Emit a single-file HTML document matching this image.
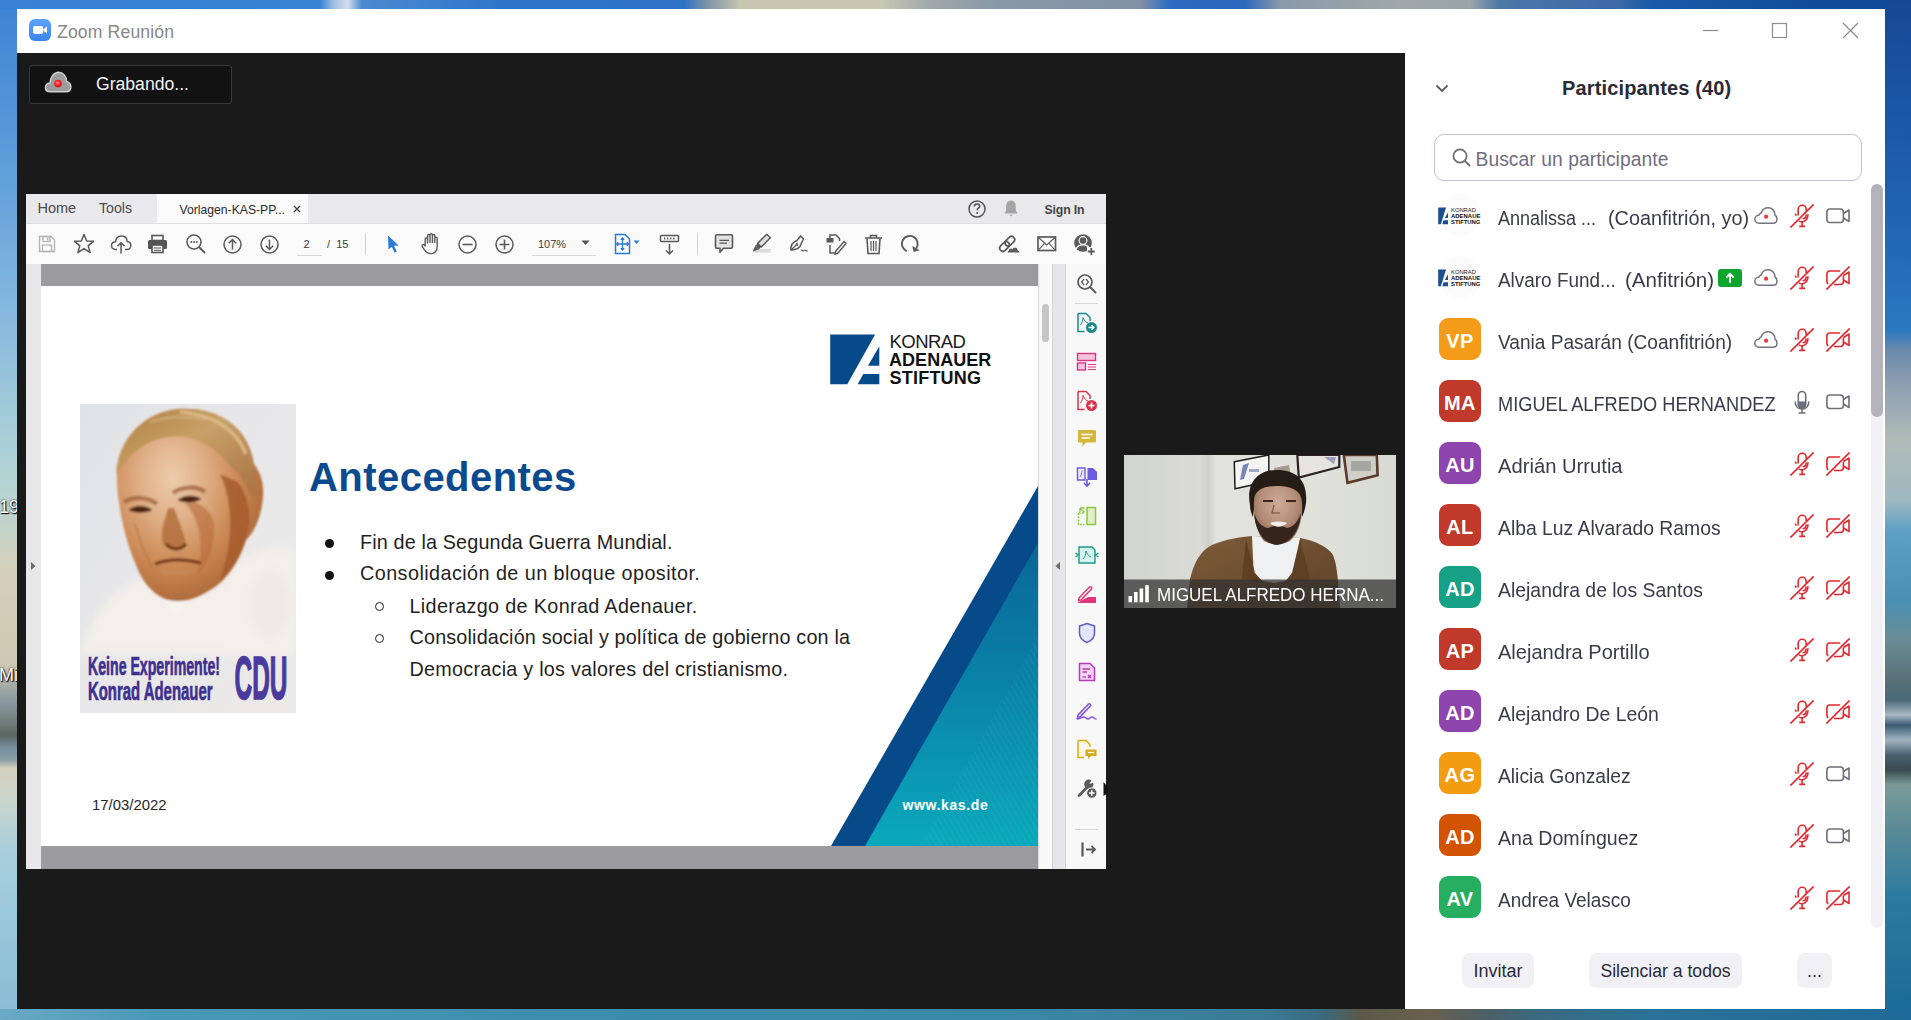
<!DOCTYPE html>
<html><head><meta charset="utf-8">
<style>
*{box-sizing:border-box;margin:0;padding:0}
html,body{width:1911px;height:1020px;overflow:hidden;background:#2f7ab8;font-family:"Liberation Sans",sans-serif}
.a{position:absolute}
#dl{left:0;top:0;width:17px;height:1020px;background:linear-gradient(180deg,#3d83d4 0px,#5a9bd9 150px,#82b6de 300px,#a9cfd8 440px,#b6d3d2 490px,#c4d4c8 530px,#d4d0bc 565px,#d2c9b4 640px,#cec6b4 666px,#a8aca8 684px,#8a9aa0 700px,#6e7a78 725px,#5c6662 735px,#7890a0 748px,#8aa0a8 760px,#d6d0be 768px,#cad6cc 800px,#a8cedc 850px,#94c4da 950px,#88bcd6 1020px)}
#dt{left:0;top:0;width:1911px;height:9px;background:linear-gradient(90deg,#3a82d6 0,#3580d2 200px,#3a84d4 320px,#a8c4e0 335px,#d0dcec 348px,#4a8ad0 362px,#2f76ca 500px,#2d72c6 684px,#7890a8 705px,#c6c6b0 740px,#c8c8b2 880px,#a0a8aa 930px,#8898a8 1000px,#8292a6 1140px,#2a6ac0 1170px,#2a68bc 1245px,#8a9aaa 1280px,#a0a8a8 1400px,#9aa4a8 1470px,#4a78a8 1500px,#3a6aa8 1620px,#1a5aa8 1650px,#124c9a 1800px,#0f4a98 1911px)}
#dr{left:1885px;top:0;width:26px;height:1020px;background:linear-gradient(180deg,#144896 0,#1a55a4 100px,#1f62b0 200px,#2a78c0 330px,#6a8aac 350px,#8a9cb0 380px,#b0bcb8 440px,#a0b8c0 500px,#5fa0c4 530px,#4a90b4 600px,#6a8c94 640px,#587078 680px,#4a6878 700px,#a8b8c4 715px,#3a5a70 725px,#a0b4c0 740px,#4a6070 755px,#3a4a50 770px,#7a9a98 785px,#5a8a98 830px,#2a7aa0 900px,#1a6a98 1020px)}
#db{left:0;top:1009px;width:1911px;height:11px;background:linear-gradient(90deg,#6aaac4 0,#4a98b8 150px,#3a8cac 640px,#3a88a8 1000px,#3a7a94 1270px,#3a6a80 1320px,#5a5a48 1360px,#6a6050 1430px,#4a6068 1490px,#3a6a80 1540px,#2a7298 1650px,#1e6a98 1911px)}
#win{left:17px;top:9px;width:1868px;height:1000px;background:#fff}
#dark{left:17px;top:53px;width:1388px;height:956px;background:#1a1a1a}

.t{position:absolute;white-space:nowrap;line-height:1}
#zicon{left:29px;top:19px;width:22px;height:22px;border-radius:6px;background:linear-gradient(180deg,#5ea3ff,#3c84f0)}
#ztitle{left:57px;top:24px;font-size:17.6px;color:#878787;letter-spacing:0.15px}
#rec{left:29px;top:65px;width:203px;height:39px;background:#121212;border:1px solid #3a3a3a;border-radius:3px}
#rect{left:96px;top:75.5px;font-size:17.6px;color:#f2f2f2;letter-spacing:0px}
#pdf{left:26px;top:194px;width:1080px;height:675px;background:#fafafa}
#tabbar{left:26px;top:194px;width:1080px;height:30px;background:#e9e8eb}
#acttab{left:157px;top:194px;width:151px;height:30px;background:#fafafa}
#lstrip{left:26px;top:264px;width:15px;height:605px;background:#e8e7ea}
#gb1{left:41px;top:264px;width:997px;height:22px;background:#9c9c9e}
#gb2{left:41px;top:846px;width:997px;height:23px;background:#9c9c9e}
#page{left:41px;top:286px;width:997px;height:560px;background:#fff;overflow:hidden}
#scol{left:1038px;top:264px;width:14px;height:605px;background:#f9f9f9;border-left:1px solid #d8d8d8}
#thumb{left:1042px;top:304px;width:7px;height:38px;background:#c6c6c6;border-radius:4px}
#gcol{left:1052px;top:264px;width:14px;height:605px;background:#e6e5e9;border-left:1px solid #d4d4d8;border-right:1px solid #d4d4d8}
#rpanel{left:1066px;top:264px;width:40px;height:605px;background:#f8f8f8}

#ttl{left:309px;top:456.5px;font-size:40px;font-weight:700;color:#0b4a8f;letter-spacing:0.45px}
.bl{font-size:19.8px;color:#1f1f1f}
.dot{width:9px;height:9px;border-radius:50%;background:#111}
.cir{width:9px;height:9px;border-radius:50%;border:1.2px solid #222}
#date{left:92px;top:798.3px;font-size:14.9px;color:#262626}

.ic{position:absolute}

#ppanel{left:1405px;top:53px;width:480px;height:956px;background:#fff}
.pn{font-size:19.7px;color:#3b3b4a;transform-origin:0 0}
.av{position:absolute;width:42px;height:42px;border-radius:9px;color:#fff;font-weight:700;font-size:20px;text-align:center;line-height:47px;letter-spacing:0.4px;text-indent:0.4px}
.btn{position:absolute;height:35px;border-radius:8px;background:#f1f1f5;font-size:18px;color:#2a2a36;text-align:center;line-height:35px}
</style></head><body>
<div id="dl" class="a"></div><div id="dt" class="a"></div><div id="dr" class="a"></div><div id="db" class="a"></div>

<div class="t" style="left:-1px;top:498px;font-size:18px;color:#fff;text-shadow:0 0 2px #000,1px 1px 1px #000">19</div>
<div class="t" style="left:-1px;top:666px;font-size:18px;color:#fff;text-shadow:0 0 2px #000,1px 1px 1px #000">Mi</div>
<div id="win" class="a"></div>
<div id="dark" class="a"></div>

<div id="zicon" class="a"><svg width="22" height="22" viewBox="0 0 22 22"><rect x="4" y="7" width="10" height="8" rx="2" fill="#fff"/><path d="M14.5 10 L18 7.5 V14.5 L14.5 12Z" fill="#fff"/></svg></div>
<div id="ztitle" class="t">Zoom Reunión</div>
<svg class="a" style="left:1690px;top:15px" width="180" height="32" viewBox="0 0 180 32"><line x1="13" y1="15.5" x2="28" y2="15.5" stroke="#8c8c8c" stroke-width="1.2"/><rect x="82.5" y="8.5" width="14" height="14" fill="none" stroke="#8c8c8c" stroke-width="1.2"/><path d="M153 8 L168 23 M168 8 L153 23" stroke="#8c8c8c" stroke-width="1.2"/></svg>
<div id="rec" class="a"></div>
<svg class="a" style="left:44px;top:71px" width="28" height="22" viewBox="0 0 28 22"><defs><radialGradient id="rdot" cx="0.45" cy="0.4" r="0.6"><stop offset="0" stop-color="#ff9090"/><stop offset="0.5" stop-color="#ff2424"/><stop offset="1" stop-color="#d01010"/></radialGradient></defs><path d="M6 20.8 C3.2 20.8 1.4 18.9 1.4 16.5 C1.4 13.9 3.4 12 6 12 C6.4 6.3 9.8 1.2 14.5 1.2 C19.3 1.2 22.4 5.2 22.7 10.6 C25.2 11.1 26.9 13.4 26.9 16 C26.9 18.9 24.8 20.8 22 20.8 Z" fill="#9c9c9c" stroke="#d0d0d0" stroke-width="1.4"/><circle cx="14" cy="12.6" r="3.8" fill="url(#rdot)"/></svg>
<div id="rect" class="t">Grabando...</div>
<div id="pdf" class="a"></div>
<div id="tabbar" class="a"></div>
<div id="acttab" class="a"></div>
<div id="lstrip" class="a"></div>
<div id="gb1" class="a"></div>
<div id="gb2" class="a"></div>
<div id="page" class="a"></div>
<div id="scol" class="a"></div>
<div id="thumb" class="a"></div>
<div id="gcol" class="a"></div>
<div id="rpanel" class="a"></div>

<svg class="a" style="left:41px;top:286px" width="997" height="560" viewBox="0 0 997 560">
<defs>
<linearGradient id="tg" x1="0" y1="0" x2="0" y2="1"><stop offset="0" stop-color="#0a6697"/><stop offset="0.45" stop-color="#0a82a8"/><stop offset="1" stop-color="#0aa9bb"/></linearGradient>
<pattern id="hatch" width="5" height="5" patternUnits="userSpaceOnUse" patternTransform="rotate(-30)"><line x1="0" y1="0" x2="0" y2="5" stroke="#ffffff" stroke-opacity="0.10" stroke-width="1"/></pattern>
</defs>
<polygon points="790,560 997,200 997,560" fill="#064a8a"/>
<polygon points="824,560 997,257 997,560" fill="url(#tg)"/>
<polygon points="880,560 997,350 997,560" fill="url(#hatch)"/>
<polygon points="789.2,48.4 834.1,48.4 806.3,98.3 789.2,98.3" fill="#064a8a"/>
<polygon points="838.3,60.2 838.3,79.7 827,79.7" fill="#064a8a"/>
<polygon points="822.3,88 838.3,88 838.3,98.3 816.7,98.3" fill="#064a8a"/>
</svg>
<div class="t" style="left:889.5px;top:332.5px;font-size:18.5px;color:#1a1a1a;letter-spacing:-0.55px">KONRAD</div>
<div class="t" style="left:889px;top:351px;font-size:18px;font-weight:700;color:#111;letter-spacing:0.05px">ADENAUER</div>
<div class="t" style="left:889.5px;top:369px;font-size:18px;font-weight:700;color:#111;letter-spacing:0.22px">STIFTUNG</div>
<div class="t" style="left:902.5px;top:798px;font-size:14px;font-weight:700;color:#fff;letter-spacing:0.62px">www.kas.de</div>
<div id="ttl" class="t">Antecedentes</div>
<div class="a dot" style="left:324.8px;top:539.2px"></div>
<div class="a dot" style="left:324.8px;top:570.6px"></div>
<div class="a cir" style="left:374.7px;top:602.3px"></div>
<div class="a cir" style="left:374.7px;top:633.7px"></div>
<div class="t bl" style="left:360px;top:532.8px;letter-spacing:0.14px">Fin de la Segunda Guerra Mundial.</div>
<div class="t bl" style="left:360px;top:564.3px;letter-spacing:0.44px">Consolidación de un bloque opositor.</div>
<div class="t bl" style="left:409.5px;top:596.7px;letter-spacing:0.34px">Liderazgo de Konrad Adenauer.</div>
<div class="t bl" style="left:409.5px;top:628px;letter-spacing:0.17px">Consolidación social y política de gobierno con la</div>
<div class="t bl" style="left:409.5px;top:659.8px;letter-spacing:0.25px">Democracia y los valores del cristianismo.</div>
<div id="date" class="t">17/03/2022</div>

<svg class="a" style="left:80px;top:404px" width="216" height="309" viewBox="0 0 216 309">
<defs>
<linearGradient id="pbg" x1="0" y1="0" x2="1" y2="1"><stop offset="0" stop-color="#e1e2e5"/><stop offset="0.5" stop-color="#e8e8ea"/><stop offset="1" stop-color="#ece9e6"/></linearGradient>
<radialGradient id="face" cx="0.38" cy="0.36" r="0.72"><stop offset="0" stop-color="#ecccaa"/><stop offset="0.3" stop-color="#e0b088"/><stop offset="0.62" stop-color="#cc8a56"/><stop offset="1" stop-color="#a45e30"/></radialGradient>
<linearGradient id="hair" x1="0" y1="0" x2="1" y2="1"><stop offset="0" stop-color="#b08040"/><stop offset="0.45" stop-color="#c8a068"/><stop offset="1" stop-color="#a87040"/></linearGradient>
<filter id="soft" x="-10%" y="-10%" width="120%" height="120%"><feGaussianBlur stdDeviation="1.3"/></filter>
<filter id="soft2" x="-20%" y="-20%" width="140%" height="140%"><feGaussianBlur stdDeviation="3.5"/></filter>
</defs>
<rect width="216" height="309" fill="url(#pbg)"/>
<g filter="url(#soft2)">
<path d="M0 250 C10 215 30 185 62 174 L95 197 L141 180 C160 150 185 140 216 145 L216 250 Z" fill="#f3efea"/>
<ellipse cx="190" cy="200" rx="22" ry="35" fill="#ebe6e0" opacity="0.5"/>
</g>
<g filter="url(#soft)">
<path d="M37 73 C35 45 55 10 97 5 C135 2 168 20 174 60 C180 68 184 78 183 92 C182 110 175 128 166 136 C158 160 145 178 130 186 C118 194 105 198 95 197 C80 196 68 185 61 172 C50 150 43 125 40 105 C38 95 37 85 37 73 Z" fill="url(#face)"/>
<path d="M36 70 C38 42 58 10 97 5 C135 2 168 20 174 62 C176 75 176 85 172 92 C166 80 160 70 152 64 C140 48 125 37 105 33 C85 30 62 38 48 55 C42 62 38 68 36 70 Z" fill="url(#hair)"/>
<path d="M100 8 C128 10 155 22 166 50" stroke="#e0c090" stroke-width="3.5" fill="none" opacity="0.8"/>
<path d="M70 18 C90 12 110 12 125 16" stroke="#d4b080" stroke-width="2.5" fill="none" opacity="0.7"/>
<path d="M140 70 C152 95 155 135 140 176 C152 168 162 150 166 135 C172 115 170 95 158 78Z" fill="#a65a2c" opacity="0.85"/>
<path d="M105 100 C118 110 125 140 118 170 C128 160 136 140 134 120 C132 110 125 102 115 98Z" fill="#b86a3a" opacity="0.6"/>
<path d="M44 98 C54 92 68 93 77 100 M93 89 C103 82 117 82 125 88" stroke="#9a5a34" stroke-width="4.5" fill="none" opacity="0.7"/>
<path d="M49 106 C55 101 65 101 72 106 C65 109 55 109 49 106Z M98 96 C105 91 114 91 121 95 C114 99 105 99 98 96Z" fill="#4a2818" stroke="#6a3a22" stroke-width="1"/>
<path d="M88 104 C84 118 80 130 83 140 C90 146 100 146 106 140 C104 128 98 115 94 104Z" fill="#b06a3a" opacity="0.8"/>
<path d="M86 140 C92 147 101 146 106 140" stroke="#6a3418" stroke-width="3.2" fill="none"/>
<path d="M75 160 C88 155 105 155 121 159" stroke="#7a3a1c" stroke-width="3.2" fill="none"/>
<path d="M80 167 C92 170 105 170 116 166" stroke="#c98a5e" stroke-width="3" fill="none" opacity="0.7"/>
<path d="M55 120 C60 138 66 152 72 164" stroke="#b87444" stroke-width="2.2" fill="none" opacity="0.6"/>
<path d="M85 197 L97 214 L108 197Z" fill="#f6f2ee"/>
</g>
<g font-family="Liberation Sans" font-weight="700">
<text x="8" y="271" font-size="26.5" fill="#3e3090" stroke="#3e3090" stroke-width="0.7" textLength="132" lengthAdjust="spacingAndGlyphs">Keine Experimente!</text>
<text x="8" y="295.8" font-size="25.5" fill="#3e3090" stroke="#3e3090" stroke-width="0.7" textLength="124.5" lengthAdjust="spacingAndGlyphs">Konrad Adenauer</text>
<text x="154.5" y="295.3" font-size="60.5" fill="#4a3a9e" stroke="#4a3a9e" stroke-width="1.6" textLength="53"  lengthAdjust="spacingAndGlyphs">CDU</text>
</g>
</svg>

<div class="t" style="left:37.5px;top:201px;font-size:14.5px;color:#4a4a4a">Home</div>
<div class="t" style="left:99px;top:201px;font-size:14.2px;color:#4a4a4a">Tools</div>
<div class="t" style="left:179.5px;top:203.5px;font-size:12.2px;color:#2b2b2b;letter-spacing:0px">Vorlagen-KAS-PP...</div>
<svg class="ic" style="left:292px;top:204px" width="10" height="10" viewBox="0 0 10 10"><path d="M2 2 L8 8 M8 2 L2 8" stroke="#444" stroke-width="1.4"/></svg>
<svg class="ic" style="left:966.5px;top:198.5px" width="20" height="20" viewBox="0 0 20 20"><circle cx="10" cy="10" r="8" fill="none" stroke="#555" stroke-width="1.5"/><path d="M7.3 7.6 C7.3 5.8 8.6 5 10 5 C11.6 5 12.7 6 12.7 7.3 C12.7 9.2 10.2 9.3 10.2 11.3" fill="none" stroke="#555" stroke-width="1.6"/><circle cx="10.2" cy="14" r="1" fill="#555"/></svg>
<svg class="ic" style="left:1003px;top:199px" width="16" height="19" viewBox="0 0 16 19"><path d="M8 1.5 C4.5 1.5 3.2 4.5 3.2 7.5 L3.2 11.5 L1.3 14.5 L14.7 14.5 L12.8 11.5 L12.8 7.5 C12.8 4.5 11.5 1.5 8 1.5Z" fill="#a4a4a4"/><path d="M6.3 15.8 L9.7 15.8 L8 17.5Z" fill="#a4a4a4"/></svg>
<div class="t" style="left:1044.5px;top:203.8px;font-size:12.3px;font-weight:700;color:#444;letter-spacing:-0.15px">Sign In</div>
<div class="a" style="left:26px;top:223px;width:1080px;height:1px;background:#dedde0"></div>

<svg class="ic" style="left:37px;top:234px" width="20" height="20" viewBox="0 0 20 20"><path d="M2.5 2.5 H14 L17.5 6 V17.5 H2.5 Z" fill="none" stroke="#b4b4b4" stroke-width="1.4"/><rect x="6" y="2.5" width="7" height="5" fill="none" stroke="#b4b4b4" stroke-width="1.3"/><rect x="10" y="3.5" width="1.5" height="3" fill="#b4b4b4"/><rect x="5.5" y="11" width="9" height="6.5" fill="none" stroke="#b4b4b4" stroke-width="1.3"/></svg>
<svg class="ic" style="left:73px;top:233px" width="22" height="21" viewBox="0 0 22 21"><path d="M11 1.5 L13.7 8 L20.5 8.3 L15.2 12.6 L17.1 19.5 L11 15.6 L4.9 19.5 L6.8 12.6 L1.5 8.3 L8.3 8 Z" fill="none" stroke="#5a5a5a" stroke-width="1.5" stroke-linejoin="round"/></svg>
<svg class="ic" style="left:110px;top:233px" width="22" height="22" viewBox="0 0 22 22"><path d="M7 16.5 H5.5 C3 16.5 1.5 14.5 1.5 12.5 C1.5 10 3.5 8.5 5.5 8.7 C6 5 8.5 3 11.5 3 C15 3 17 5.5 17.2 8.5 C19.5 8.7 20.8 10.5 20.8 12.5 C20.8 14.8 19 16.5 16.8 16.5 H15" fill="none" stroke="#5a5a5a" stroke-width="1.5"/><path d="M11 20.5 V10 M7.5 13.3 L11 9.8 L14.5 13.3" fill="none" stroke="#5a5a5a" stroke-width="1.5"/></svg>
<svg class="ic" style="left:147px;top:234px" width="21" height="20" viewBox="0 0 21 20"><rect x="5" y="1.5" width="11" height="5" fill="none" stroke="#555" stroke-width="1.6"/><rect x="1" y="6" width="19" height="9" rx="1.5" fill="#555"/><rect x="5" y="11" width="11" height="7.5" fill="#fafafa" stroke="#555" stroke-width="1.6"/><path d="M7 14 H14 M7 16.3 H14" stroke="#555" stroke-width="1"/></svg>
<svg class="ic" style="left:185px;top:233px" width="22" height="22" viewBox="0 0 22 22"><circle cx="9" cy="9" r="7" fill="none" stroke="#5a5a5a" stroke-width="1.6"/><path d="M14 14 L20 20" stroke="#5a5a5a" stroke-width="1.8"/><circle cx="6.3" cy="9" r="1" fill="#5a5a5a"/><circle cx="9" cy="9" r="1" fill="#5a5a5a"/><circle cx="11.7" cy="9" r="1" fill="#5a5a5a"/></svg>
<svg class="ic" style="left:222px;top:234px" width="21" height="21" viewBox="0 0 21 21"><circle cx="10.5" cy="10.5" r="8.5" fill="none" stroke="#5a5a5a" stroke-width="1.5"/><path d="M10.5 15.5 V5.5 M6.8 9.2 L10.5 5.5 L14.2 9.2" fill="none" stroke="#5a5a5a" stroke-width="1.5"/></svg>
<svg class="ic" style="left:259px;top:234px" width="21" height="21" viewBox="0 0 21 21"><circle cx="10.5" cy="10.5" r="8.5" fill="none" stroke="#5a5a5a" stroke-width="1.5"/><path d="M10.5 5.5 V15.5 M6.8 11.8 L10.5 15.5 L14.2 11.8" fill="none" stroke="#5a5a5a" stroke-width="1.5"/></svg>
<div class="t" style="left:303.5px;top:238.5px;font-size:11px;color:#3a3a3a">2</div>
<div class="a" style="left:297px;top:255px;width:25px;height:1px;background:#d8d8d8"></div>
<div class="t" style="left:327px;top:238.5px;font-size:11px;color:#3a3a3a">/ &nbsp;15</div>
<div class="a" style="left:365px;top:233px;width:1px;height:22px;background:#d4d4d4"></div>
<svg class="ic" style="left:385px;top:234px" width="16" height="20" viewBox="0 0 16 20"><path d="M3 1.5 L13.5 11.5 L9 11.8 L11.8 17.5 L9.5 18.5 L6.8 12.8 L3.5 15.5 Z" fill="#2c7ad8"/></svg>
<svg class="ic" style="left:420px;top:232px" width="21" height="23" viewBox="0 0 21 23"><path d="M5.2 13.5 V7 C5.2 5.6 7.6 5.6 7.6 7 V11 M7.6 10.5 V3.6 C7.6 2.2 10 2.2 10 3.6 V10.5 M10 10.5 V2.8 C10 1.4 12.4 1.4 12.4 2.8 V10.5 M12.4 10.5 V3.6 C12.4 2.2 14.8 2.2 14.8 3.6 V10.5 M14.8 10.5 V6.2 C14.8 4.8 17.2 4.8 17.2 6.2 V14 C17.2 19 14.6 21.6 11 21.6 C7.5 21.6 6 20.2 4.4 17.8 L2.2 14.3 C1.4 13 3.2 11.9 4.2 12.9 L5.2 14" fill="none" stroke="#5a5a5a" stroke-width="1.4" stroke-linejoin="round" stroke-linecap="round"/></svg>
<svg class="ic" style="left:457px;top:234px" width="21" height="21" viewBox="0 0 21 21"><circle cx="10.5" cy="10.5" r="8.5" fill="none" stroke="#5a5a5a" stroke-width="1.5"/><path d="M5.5 10.5 H15.5" stroke="#5a5a5a" stroke-width="1.6"/></svg>
<svg class="ic" style="left:494px;top:234px" width="21" height="21" viewBox="0 0 21 21"><circle cx="10.5" cy="10.5" r="8.5" fill="none" stroke="#5a5a5a" stroke-width="1.5"/><path d="M5.5 10.5 H15.5 M10.5 5.5 V15.5" stroke="#5a5a5a" stroke-width="1.6"/></svg>
<div class="t" style="left:538px;top:238.5px;font-size:11px;color:#3a3a3a">107%</div>
<svg class="ic" style="left:581px;top:240px" width="9" height="6" viewBox="0 0 9 6"><path d="M0.5 0.5 H8.5 L4.5 5Z" fill="#555"/></svg>
<div class="a" style="left:532px;top:255px;width:64px;height:1px;background:#d8d8d8"></div>
<svg class="ic" style="left:613px;top:233px" width="28" height="22" viewBox="0 0 28 22"><path d="M2.5 1.5 H12 L16.5 6 V20.5 H2.5 Z" fill="none" stroke="#2c7ad8" stroke-width="1.5"/><path d="M9.5 5 V17 M3.5 11 H15.5 M7.8 6.8 L9.5 5 L11.2 6.8 M7.8 15.2 L9.5 17 L11.2 15.2 M5.3 9.3 L3.5 11 L5.3 12.7 M13.7 9.3 L15.5 11 L13.7 12.7" fill="none" stroke="#2c7ad8" stroke-width="1.3"/><path d="M20.5 7.5 H26.5 L23.5 11Z" fill="#2c7ad8"/></svg>
<svg class="ic" style="left:659px;top:234px" width="22" height="22" viewBox="0 0 22 22"><rect x="1.5" y="1.5" width="18" height="6" rx="1" fill="none" stroke="#5a5a5a" stroke-width="1.5"/><path d="M5 4.5 H6.3 M8 4.5 H9.3 M11 4.5 H12.3 M14 4.5 H15.3" stroke="#5a5a5a" stroke-width="1.8"/><path d="M10.5 10 V20 M7 16.5 L10.5 20 L14 16.5" fill="none" stroke="#5a5a5a" stroke-width="1.5"/></svg>
<div class="a" style="left:697px;top:233px;width:1px;height:22px;background:#d4d4d4"></div>
<svg class="ic" style="left:714px;top:233px" width="20" height="21" viewBox="0 0 20 21"><path d="M3 1.8 H17 C17.8 1.8 18.5 2.5 18.5 3.3 V13.8 C18.5 14.6 17.8 15.3 17 15.3 H9.5 L6 19.3 V15.3 H3 C2.2 15.3 1.5 14.6 1.5 13.8 V3.3 C1.5 2.5 2.2 1.8 3 1.8Z" fill="#e2e2e2" stroke="#5a5a5a" stroke-width="1.6" stroke-linejoin="round"/><path d="M5.5 7.3 H15 M5.5 10.2 H13" stroke="#5a5a5a" stroke-width="1.2"/></svg>
<svg class="ic" style="left:751px;top:232px" width="22" height="22" viewBox="0 0 22 22"><rect x="1.8" y="16.9" width="18" height="3.7" fill="#dadada"/><polygon points="15.8,2.2 19.4,5.8 10.2,15 6.6,11.4" fill="#e0e0e0" stroke="#5a5a5a" stroke-width="1.5" stroke-linejoin="round"/><polygon points="6.6,11.4 10.2,15 7.8,17.4 4.2,13.8" fill="#5a5a5a"/><polygon points="4.2,13.8 7.8,17.4 1.8,19.6" fill="#5a5a5a"/></svg>
<svg class="ic" style="left:788px;top:233px" width="22" height="22" viewBox="0 0 22 22"><path d="M3 17 C2.5 12 5 9 9 7.5 L12.5 3 L15.5 6 L13.5 10 C12.5 14 9 17 3 17Z" fill="none" stroke="#5a5a5a" stroke-width="1.5"/><circle cx="9" cy="11.5" r="1.3" fill="#5a5a5a"/><path d="M3 17 L8.5 11.8" stroke="#5a5a5a" stroke-width="1.2"/><path d="M13 17.5 C14 16 15 19 16 17.5 C17 16 18 19 19.5 17.5" stroke="#5a5a5a" stroke-width="1.1" fill="none"/></svg>
<svg class="ic" style="left:825px;top:233px" width="22" height="22" viewBox="0 0 22 22"><path d="M5 5.5 V2 H11 L14.5 5.5 V8" fill="none" stroke="#5a5a5a" stroke-width="1.5"/><rect x="1.5" y="5" width="7" height="4.5" fill="#5a5a5a"/><path d="M5 12 V20 H10" fill="none" stroke="#5a5a5a" stroke-width="1.5"/><path d="M10.5 18.5 L19 8.5 L21 10.5 L12.5 20.5 L10 21 Z" fill="none" stroke="#5a5a5a" stroke-width="1.4"/></svg>
<svg class="ic" style="left:863px;top:233px" width="21" height="22" viewBox="0 0 21 22"><path d="M2 5 H19 M7.5 5 V2.5 H13.5 V5" fill="none" stroke="#5a5a5a" stroke-width="1.6"/><path d="M4 5.5 L5 20.5 H16 L17 5.5" fill="none" stroke="#5a5a5a" stroke-width="1.6"/><path d="M8 8 V18 M10.5 8 V18 M13 8 V18" stroke="#5a5a5a" stroke-width="1.2"/></svg>
<svg class="ic" style="left:900px;top:233px" width="22" height="22" viewBox="0 0 22 22"><path d="M6.1 17.8 A7.9 7.9 0 1 1 16.6 14.8" fill="none" stroke="#5a5a5a" stroke-width="1.9" stroke-linecap="round"/><path d="M12.3 13 L19.7 17.2 L13.6 19.1Z" fill="#5a5a5a"/></svg>
<svg class="ic" style="left:997px;top:232px" width="24" height="23" viewBox="0 0 24 23"><g transform="rotate(-45 10 12)" fill="none" stroke="#5a5a5a" stroke-width="1.7"><rect x="1" y="8.8" width="11" height="6.4" rx="3.2"/><rect x="8.5" y="8.8" width="11" height="6.4" rx="3.2"/></g><path d="M11.5 21 C10 21 9.8 18.6 11.5 18.4 C11.5 16.2 14 15.5 15.5 16.7 C16.5 14.2 21 14.7 21 18.2 C23 18.2 23 21 21.5 21Z" fill="#5a5a5a" stroke="#fafafa" stroke-width="1"/></svg>
<svg class="ic" style="left:1037px;top:236px" width="20" height="16" viewBox="0 0 20 16"><rect x="1" y="1" width="17.5" height="13.5" fill="none" stroke="#5a5a5a" stroke-width="1.7"/><path d="M1.5 1.5 L9.75 9 L18 1.5 M1.5 14 L7.5 7.3 M18 14 L12 7.3" fill="none" stroke="#5a5a5a" stroke-width="1.1"/></svg>
<svg class="ic" style="left:1073px;top:233px" width="23" height="23" viewBox="0 0 23 23"><circle cx="10" cy="10" r="8.8" fill="#5a5a5a"/><path d="M3.2 15.8 C4.5 12.8 7 11.8 10 11.8 C13 11.8 15.5 12.8 16.8 15.8" fill="none" stroke="#fafafa" stroke-width="1.3"/><circle cx="10" cy="7.6" r="3.9" fill="#5a5a5a" stroke="#fafafa" stroke-width="1.2"/><rect x="14" y="14" width="9" height="9" fill="#fafafa"/><path d="M14.8 18.5 H21.8 M18.3 15 V22" stroke="#5a5a5a" stroke-width="1.8"/></svg>

<svg class="ic" style="left:1076px;top:273px" width="22" height="22" viewBox="0 0 22 22"><circle cx="9" cy="9" r="7" fill="none" stroke="#5a5a5a" stroke-width="1.7"/><path d="M14 14 L20 20" stroke="#5a5a5a" stroke-width="2"/><path d="M8 6 L5.5 9 L8 12 M10 6 L12.5 9 L10 12" fill="none" stroke="#5a5a5a" stroke-width="1.2"/></svg>
<div class="a" style="left:1075px;top:303px;width:23px;height:1px;background:#d8d8d8"></div>
<svg class="ic" style="left:1076px;top:312px" width="22" height="22" viewBox="0 0 22 22"><path d="M2 1.5 H10 L14 5.5 V9 M8.5 19.5 H2 V1.5" fill="none" stroke="#1a8a8a" stroke-width="1.5"/><path d="M4.5 13 C6 11 7 8 7 5.5 C8 8 10 10.5 12 11" fill="none" stroke="#1a8a8a" stroke-width="1"/><circle cx="15.5" cy="15.5" r="5.5" fill="#1a8a8a"/><path d="M12.5 15.5 H17.5 M15.5 13.2 L17.8 15.5 L15.5 17.8" fill="none" stroke="#fff" stroke-width="1.4"/></svg>
<svg class="ic" style="left:1076px;top:352px" width="22" height="20" viewBox="0 0 22 20"><rect x="1.5" y="1.5" width="18" height="7" fill="#f4c6dc" stroke="#d9368a" stroke-width="1.4"/><rect x="1.5" y="11" width="8" height="7" fill="#f4c6dc" stroke="#d9368a" stroke-width="1.4"/><path d="M12 12.5 H20 M12 15 H20 M12 17.5 H20" stroke="#d9368a" stroke-width="1.1"/></svg>
<svg class="ic" style="left:1076px;top:390px" width="22" height="22" viewBox="0 0 22 22"><path d="M2 1.5 H10 L14 5.5 V9 M8.5 19.5 H2 V1.5" fill="none" stroke="#d6334a" stroke-width="1.5"/><path d="M4.5 13 C6 11 7 8 7 5.5 C8 8 10 10.5 12 11" fill="none" stroke="#d6334a" stroke-width="1"/><circle cx="15.5" cy="15.5" r="5.5" fill="#d6334a"/><path d="M12.5 15.5 H18.5 M15.5 12.5 V18.5" stroke="#fff" stroke-width="1.5"/></svg>
<svg class="ic" style="left:1077px;top:429px" width="20" height="20" viewBox="0 0 20 20"><path d="M1 2.5 C1 1.5 1.5 1 2.5 1 H17.5 C18.5 1 19 1.5 19 2.5 V12 C19 13 18.5 13.5 17.5 13.5 H9 L5.5 17.5 V13.5 H2.5 C1.5 13.5 1 13 1 12Z" fill="#d4b73a"/><path d="M4.5 5.5 H15.5 M4.5 9 H13" stroke="#fff" stroke-width="1.5"/></svg>
<svg class="ic" style="left:1076px;top:466px" width="22" height="22" viewBox="0 0 22 22"><path d="M1.5 2 H9 V14 H1.5Z" fill="#eceaff" stroke="#6a5cdc" stroke-width="1.4"/><path d="M11.5 2 H17 L21 6 V14 H11.5Z" fill="#6a5cdc"/><path d="M4 11 C5 9 6 7 6 4.5" fill="none" stroke="#6a5cdc" stroke-width="0.9"/><path d="M11 13 V20 M8 17 L11 20 L14 17" fill="none" stroke="#6a5cdc" stroke-width="1.6"/></svg>
<svg class="ic" style="left:1077px;top:506px" width="20" height="20" viewBox="0 0 20 20"><rect x="10" y="1.5" width="8.5" height="17" fill="#dff0c8" stroke="#8cc63e" stroke-width="1.5"/><path d="M1.5 7 V18.5 H7.5 M1.5 7 H7.5" fill="none" stroke="#8cc63e" stroke-width="1.5" stroke-dasharray="2 1.2"/><path d="M7.5 2 L3 2 M3 2 L3 6 M3 2 L7.5 6.5" fill="none" stroke="#8cc63e" stroke-width="1.3"/></svg>
<svg class="ic" style="left:1075px;top:545px" width="24" height="20" viewBox="0 0 24 20"><path d="M4 2 H17 L20 5 V18 H4Z" fill="#d8f0ee" stroke="#1a9a8a" stroke-width="1.4"/><path d="M0.5 8 L3.5 10 L0.5 12 M23.5 8 L20.5 10 L23.5 12" fill="none" stroke="#1a9a8a" stroke-width="1.4"/><path d="M8 14 C10 12 11 9 11 6 C12 9 14 11.5 16 12" fill="none" stroke="#1a9a8a" stroke-width="1"/></svg>
<svg class="ic" style="left:1076px;top:584px" width="22" height="20" viewBox="0 0 22 20"><path d="M3 14 L13.5 3 C14.5 2 16.5 4 15.5 5 L5 16 L2.5 16.5Z" fill="none" stroke="#e0357a" stroke-width="1.5"/><path d="M1 19 H20 V13 H12Z" fill="#e0357a"/></svg>
<svg class="ic" style="left:1078px;top:622px" width="18" height="22" viewBox="0 0 18 22"><path d="M9 1.5 L16.5 4 V11 C16.5 15.5 13 19 9 20.5 C5 19 1.5 15.5 1.5 11 V4Z" fill="#e4e4fa" stroke="#5c5cc8" stroke-width="1.5"/><path d="M9 2 V20" stroke="#fff" stroke-width="0"/></svg>
<svg class="ic" style="left:1078px;top:662px" width="18" height="20" viewBox="0 0 18 20"><path d="M1.5 1.5 H12 L16.5 6 V18.5 H1.5Z" fill="#f4d4f4" stroke="#b83ab8" stroke-width="1.5"/><path d="M4.5 7 H12 M4.5 10 H9" stroke="#b83ab8" stroke-width="1.3"/><path d="M10 13 L13 16 M13 13 L10 16" stroke="#b83ab8" stroke-width="1.2"/><path d="M4.5 15 H8" stroke="#b83ab8" stroke-width="1.3"/></svg>
<svg class="ic" style="left:1075px;top:700px" width="23" height="22" viewBox="0 0 23 22"><path d="M3 15 L13.5 4 C14.5 3 16.5 5 15.5 6 L5 17 L2.5 17.5Z" fill="#e4dcfa" stroke="#8454d8" stroke-width="1.5"/><path d="M1.5 19 C5 19 7 17 9 17 C11 17 11 19 13 19 C15 19 15 17 17 17 C19 17 19 19 21.5 19" fill="none" stroke="#8454d8" stroke-width="1.3"/></svg>
<svg class="ic" style="left:1076px;top:739px" width="22" height="22" viewBox="0 0 22 22"><path d="M2 1.5 H10 L14 5.5 V8 M8 18.5 H2 V1.5" fill="#fff6cc" stroke="#d4ae1e" stroke-width="1.5"/><path d="M9.5 10.5 H20.5 V17 H15 L12 20 V17 H9.5Z" fill="#d4ae1e"/><path d="M12 13.5 H18" stroke="#fff" stroke-width="1.2"/></svg>
<svg class="ic" style="left:1076px;top:777px" width="22" height="22" viewBox="0 0 22 22"><path d="M3 18.5 L10.5 11" stroke="#5a5a5a" stroke-width="2.6" stroke-linecap="round"/><circle cx="12.8" cy="7.2" r="4.6" fill="#5a5a5a"/><path d="M13 7 L17 1.5 L19.5 5 Z" fill="#f8f8f8"/><circle cx="15.8" cy="16" r="5.2" fill="#5a5a5a" stroke="#f8f8f8" stroke-width="1"/><path d="M13 16 H18.6 M15.8 13.2 V18.8" stroke="#fff" stroke-width="1.5"/></svg>
<div class="a" style="left:1075px;top:828.5px;width:23px;height:1px;background:#d8d8d8"></div>
<svg class="ic" style="left:1081px;top:842px" width="16" height="15" viewBox="0 0 16 15"><path d="M1.5 0.5 V14.5" stroke="#5a5a5a" stroke-width="2.2"/><path d="M5 7.5 H14 M10.5 4 L14 7.5 L10.5 11" fill="none" stroke="#5a5a5a" stroke-width="1.8"/></svg>
<svg class="ic" style="left:30px;top:561px" width="6" height="10" viewBox="0 0 6 10"><path d="M1 1 L5.5 5 L1 9Z" fill="#6a6a6a"/></svg>
<svg class="ic" style="left:1055px;top:561px" width="6" height="10" viewBox="0 0 6 10"><path d="M5 1 L0.5 5 L5 9Z" fill="#6a6a6a"/></svg>


<div id="ppanel" class="a"></div>

<svg class="ic" style="left:1434px;top:80px" width="16" height="16" viewBox="0 0 16 16"><path d="M2.5 5.5 L8 11 L13.5 5.5" fill="none" stroke="#5c5c6a" stroke-width="1.8"/></svg>
<div class="t" style="left:1562px;top:78px;font-size:20px;font-weight:700;color:#2a2a36;letter-spacing:0.15px">Participantes (40)</div>
<div class="a" style="left:1434px;top:134px;width:428px;height:47px;border:1.8px solid #c2c0d4;border-radius:10px"></div>
<svg class="ic" style="left:1450.7px;top:147.4px" width="22" height="22" viewBox="0 0 22 22"><circle cx="9" cy="9" r="6.6" fill="none" stroke="#6b6b7a" stroke-width="1.7"/><path d="M13.8 13.8 L19 19" stroke="#6b6b7a" stroke-width="1.9"/></svg>
<div class="t" style="left:1475.5px;top:149.6px;font-size:19.3px;color:#6f6e82;letter-spacing:0.05px">Buscar un participante</div>
<div class="a" style="left:1871px;top:184px;width:12px;height:744px;border-radius:6px;background:#f1f0f5"></div>
<div class="a" style="left:1871px;top:184px;width:12px;height:233px;border-radius:6px;background:#b4b3bb"></div>
<div class="a" style="left:1438.5px;top:194.4px;width:42px;height:42px;border-radius:21px;background:#fbfbfb"></div><svg class="ic" style="left:1438px;top:204.4px" width="44" height="22" viewBox="0 0 44 22"><polygon points="0.2,3.6 8,3.6 2.9,20.2 0.2,20.2" fill="#1d4f8f"/><polygon points="10,8.4 10,14 6.9,14" fill="#1d4f8f"/><polygon points="5.6,16.2 10,16.2 10,20.2 4.3,20.2" fill="#1d4f8f"/><text x="13" y="8.4" font-family="Liberation Sans" font-size="6" fill="#222" textLength="24.9" lengthAdjust="spacingAndGlyphs">KONRAD</text><text x="13" y="14.1" font-family="Liberation Sans" font-weight="700" font-size="6" fill="#111" textLength="29.4" lengthAdjust="spacingAndGlyphs">ADENAUE</text><text x="13" y="20.2" font-family="Liberation Sans" font-weight="700" font-size="6" fill="#111" textLength="29.4" lengthAdjust="spacingAndGlyphs">STIFTUNG</text></svg><div class="t pn" style="left:1498.4px;top:209.0px;transform:scaleX(0.9147)">Annalissa ...</div><div class="t pn" style="left:1608.4px;top:209.0px;transform:scaleX(1.0081)">(Coanfitrión, yo)</div><svg class="ic" style="left:1754px;top:203.9px" width="24" height="24" viewBox="0 0 24 24"><path d="M5 19.2 C2.5 19.2 0.8 17.5 0.8 15.3 C0.8 13 2.6 11.3 4.9 11.3 C5.3 10.2 6.1 9.3 7.3 8.8 C8.3 5.5 11.2 3.8 14.3 3.8 C18.3 3.8 21 7 21 11 C22.3 11.8 23 13.4 23 15.2 C23 17.5 21.3 19.2 19 19.2 Z" fill="none" stroke="#737382" stroke-width="1.5" stroke-linejoin="round"/><circle cx="12.1" cy="12.7" r="2.1" fill="#f0363f"/></svg><svg class="ic" style="left:1790px;top:203.9px" width="24" height="24" viewBox="0 0 24 24"><g fill="none" stroke="#e0282e" stroke-width="1.6"><path d="M8.2 11.5 V5.3 A4 4 0 0 1 16.2 5.3 V7"/><path d="M16.2 10.5 C16.2 12.8 14.8 14.6 12.6 14.8"/><path d="M18 10.3 C17.8 14.8 15.6 17.6 12.1 17.8 C10.8 17.8 9.8 17.4 9 16.8"/><path d="M5.2 9.6 L6.3 11.6"/><path d="M12.1 17.8 V22.4 M9.2 22.4 H15.1"/><path d="M0.4 23.6 L23.6 0.4"/></g></svg><svg class="ic" style="left:1826px;top:203.9px" width="24" height="24" viewBox="0 0 24 24"><g fill="none" stroke="#6e6e7c" stroke-width="1.6" stroke-linejoin="round"><rect x="0.9" y="5" width="16.5" height="13.5" rx="3"/><path d="M17.4 9.5 L23 6 V17.5 L17.4 14"/></g></svg>
<div class="a" style="left:1438.5px;top:256.4px;width:42px;height:42px;border-radius:21px;background:#fbfbfb"></div><svg class="ic" style="left:1438px;top:266.4px" width="44" height="22" viewBox="0 0 44 22"><polygon points="0.2,3.6 8,3.6 2.9,20.2 0.2,20.2" fill="#1d4f8f"/><polygon points="10,8.4 10,14 6.9,14" fill="#1d4f8f"/><polygon points="5.6,16.2 10,16.2 10,20.2 4.3,20.2" fill="#1d4f8f"/><text x="13" y="8.4" font-family="Liberation Sans" font-size="6" fill="#222" textLength="24.9" lengthAdjust="spacingAndGlyphs">KONRAD</text><text x="13" y="14.1" font-family="Liberation Sans" font-weight="700" font-size="6" fill="#111" textLength="29.4" lengthAdjust="spacingAndGlyphs">ADENAUE</text><text x="13" y="20.2" font-family="Liberation Sans" font-weight="700" font-size="6" fill="#111" textLength="29.4" lengthAdjust="spacingAndGlyphs">STIFTUNG</text></svg><div class="t pn" style="left:1498.4px;top:271.0px;transform:scaleX(0.9611)">Alvaro Fund...</div><div class="t pn" style="left:1624.7px;top:271.0px;transform:scaleX(1.0440)">(Anfitrión)</div><div class="a" style="left:1718.2px;top:269.2px;width:23.7px;height:17.6px;border-radius:3px;background:#0ea52e"></div><svg class="ic" style="left:1718px;top:269px" width="24" height="18" viewBox="0 0 24 18"><path d="M12 14 V5 M8.3 8.5 L12 4.8 L15.7 8.5" fill="none" stroke="#fff" stroke-width="1.9"/></svg><svg class="ic" style="left:1754px;top:265.9px" width="24" height="24" viewBox="0 0 24 24"><path d="M5 19.2 C2.5 19.2 0.8 17.5 0.8 15.3 C0.8 13 2.6 11.3 4.9 11.3 C5.3 10.2 6.1 9.3 7.3 8.8 C8.3 5.5 11.2 3.8 14.3 3.8 C18.3 3.8 21 7 21 11 C22.3 11.8 23 13.4 23 15.2 C23 17.5 21.3 19.2 19 19.2 Z" fill="none" stroke="#737382" stroke-width="1.5" stroke-linejoin="round"/><circle cx="12.1" cy="12.7" r="2.1" fill="#f0363f"/></svg><svg class="ic" style="left:1790px;top:265.9px" width="24" height="24" viewBox="0 0 24 24"><g fill="none" stroke="#e0282e" stroke-width="1.6"><path d="M8.2 11.5 V5.3 A4 4 0 0 1 16.2 5.3 V7"/><path d="M16.2 10.5 C16.2 12.8 14.8 14.6 12.6 14.8"/><path d="M18 10.3 C17.8 14.8 15.6 17.6 12.1 17.8 C10.8 17.8 9.8 17.4 9 16.8"/><path d="M5.2 9.6 L6.3 11.6"/><path d="M12.1 17.8 V22.4 M9.2 22.4 H15.1"/><path d="M0.4 23.6 L23.6 0.4"/></g></svg><svg class="ic" style="left:1826px;top:265.9px" width="24" height="24" viewBox="0 0 24 24"><g fill="none" stroke="#e0282e" stroke-width="1.6" stroke-linejoin="round"><path d="M14.2 5 H3.9 C2.2 5 0.9 6.3 0.9 8 V15.5 C0.9 16.6 1.4 17.5 2.3 18"/><path d="M8 18.5 H14.4 C16.1 18.5 17.4 17.2 17.4 15.5 V9.8"/><path d="M17.4 9.5 L23 6 V17.5 L17.4 14"/><path d="M0.4 23.6 L23.6 0.4"/></g></svg>
<div class="av" style="left:1438.8px;top:318.4px;background:#f49c19">VP</div><div class="t pn" style="left:1498.4px;top:333.0px;transform:scaleX(0.9698)">Vania Pasarán (Coanfitrión)</div><svg class="ic" style="left:1754px;top:327.9px" width="24" height="24" viewBox="0 0 24 24"><path d="M5 19.2 C2.5 19.2 0.8 17.5 0.8 15.3 C0.8 13 2.6 11.3 4.9 11.3 C5.3 10.2 6.1 9.3 7.3 8.8 C8.3 5.5 11.2 3.8 14.3 3.8 C18.3 3.8 21 7 21 11 C22.3 11.8 23 13.4 23 15.2 C23 17.5 21.3 19.2 19 19.2 Z" fill="none" stroke="#737382" stroke-width="1.5" stroke-linejoin="round"/><circle cx="12.1" cy="12.7" r="2.1" fill="#f0363f"/></svg><svg class="ic" style="left:1790px;top:327.9px" width="24" height="24" viewBox="0 0 24 24"><g fill="none" stroke="#e0282e" stroke-width="1.6"><path d="M8.2 11.5 V5.3 A4 4 0 0 1 16.2 5.3 V7"/><path d="M16.2 10.5 C16.2 12.8 14.8 14.6 12.6 14.8"/><path d="M18 10.3 C17.8 14.8 15.6 17.6 12.1 17.8 C10.8 17.8 9.8 17.4 9 16.8"/><path d="M5.2 9.6 L6.3 11.6"/><path d="M12.1 17.8 V22.4 M9.2 22.4 H15.1"/><path d="M0.4 23.6 L23.6 0.4"/></g></svg><svg class="ic" style="left:1826px;top:327.9px" width="24" height="24" viewBox="0 0 24 24"><g fill="none" stroke="#e0282e" stroke-width="1.6" stroke-linejoin="round"><path d="M14.2 5 H3.9 C2.2 5 0.9 6.3 0.9 8 V15.5 C0.9 16.6 1.4 17.5 2.3 18"/><path d="M8 18.5 H14.4 C16.1 18.5 17.4 17.2 17.4 15.5 V9.8"/><path d="M17.4 9.5 L23 6 V17.5 L17.4 14"/><path d="M0.4 23.6 L23.6 0.4"/></g></svg>
<div class="av" style="left:1438.8px;top:380.4px;background:#c0392b">MA</div><div class="t pn" style="left:1498.4px;top:395.0px;transform:scaleX(0.9250)">MIGUEL ALFREDO HERNANDEZ</div><svg class="ic" style="left:1790px;top:389.9px" width="24" height="24" viewBox="0 0 24 24"><g fill="none" stroke="#6e6e7c" stroke-width="1.6"><path d="M8.3 8.5 V5.2 A3.7 3.7 0 0 1 15.7 5.2 V14.5 A3.7 3.7 0 0 1 8.3 14.5 Z"/><path d="M5.2 11.5 C5.2 16 8 19 12 19 C16 19 18.8 16 18.8 11.5"/><path d="M12 19 V23 M8.5 23 H15.5"/></g><path d="M8.3 11.5 H15.7 V14.5 A3.7 3.7 0 0 1 8.3 14.5Z" fill="#6e6e7c"/></svg><svg class="ic" style="left:1826px;top:389.9px" width="24" height="24" viewBox="0 0 24 24"><g fill="none" stroke="#6e6e7c" stroke-width="1.6" stroke-linejoin="round"><rect x="0.9" y="5" width="16.5" height="13.5" rx="3"/><path d="M17.4 9.5 L23 6 V17.5 L17.4 14"/></g></svg>
<div class="av" style="left:1438.8px;top:442.4px;background:#8e44ad">AU</div><div class="t pn" style="left:1498.4px;top:457.0px;transform:scaleX(1.0259)">Adrián Urrutia</div><svg class="ic" style="left:1790px;top:451.9px" width="24" height="24" viewBox="0 0 24 24"><g fill="none" stroke="#e0282e" stroke-width="1.6"><path d="M8.2 11.5 V5.3 A4 4 0 0 1 16.2 5.3 V7"/><path d="M16.2 10.5 C16.2 12.8 14.8 14.6 12.6 14.8"/><path d="M18 10.3 C17.8 14.8 15.6 17.6 12.1 17.8 C10.8 17.8 9.8 17.4 9 16.8"/><path d="M5.2 9.6 L6.3 11.6"/><path d="M12.1 17.8 V22.4 M9.2 22.4 H15.1"/><path d="M0.4 23.6 L23.6 0.4"/></g></svg><svg class="ic" style="left:1826px;top:451.9px" width="24" height="24" viewBox="0 0 24 24"><g fill="none" stroke="#e0282e" stroke-width="1.6" stroke-linejoin="round"><path d="M14.2 5 H3.9 C2.2 5 0.9 6.3 0.9 8 V15.5 C0.9 16.6 1.4 17.5 2.3 18"/><path d="M8 18.5 H14.4 C16.1 18.5 17.4 17.2 17.4 15.5 V9.8"/><path d="M17.4 9.5 L23 6 V17.5 L17.4 14"/><path d="M0.4 23.6 L23.6 0.4"/></g></svg>
<div class="av" style="left:1438.8px;top:504.4px;background:#c0392b">AL</div><div class="t pn" style="left:1498.4px;top:519.0px;transform:scaleX(0.9826)">Alba Luz Alvarado Ramos</div><svg class="ic" style="left:1790px;top:513.9px" width="24" height="24" viewBox="0 0 24 24"><g fill="none" stroke="#e0282e" stroke-width="1.6"><path d="M8.2 11.5 V5.3 A4 4 0 0 1 16.2 5.3 V7"/><path d="M16.2 10.5 C16.2 12.8 14.8 14.6 12.6 14.8"/><path d="M18 10.3 C17.8 14.8 15.6 17.6 12.1 17.8 C10.8 17.8 9.8 17.4 9 16.8"/><path d="M5.2 9.6 L6.3 11.6"/><path d="M12.1 17.8 V22.4 M9.2 22.4 H15.1"/><path d="M0.4 23.6 L23.6 0.4"/></g></svg><svg class="ic" style="left:1826px;top:513.9px" width="24" height="24" viewBox="0 0 24 24"><g fill="none" stroke="#e0282e" stroke-width="1.6" stroke-linejoin="round"><path d="M14.2 5 H3.9 C2.2 5 0.9 6.3 0.9 8 V15.5 C0.9 16.6 1.4 17.5 2.3 18"/><path d="M8 18.5 H14.4 C16.1 18.5 17.4 17.2 17.4 15.5 V9.8"/><path d="M17.4 9.5 L23 6 V17.5 L17.4 14"/><path d="M0.4 23.6 L23.6 0.4"/></g></svg>
<div class="av" style="left:1438.8px;top:566.4px;background:#16a085">AD</div><div class="t pn" style="left:1498.4px;top:581.0px;transform:scaleX(0.9853)">Alejandra de los Santos</div><svg class="ic" style="left:1790px;top:575.9px" width="24" height="24" viewBox="0 0 24 24"><g fill="none" stroke="#e0282e" stroke-width="1.6"><path d="M8.2 11.5 V5.3 A4 4 0 0 1 16.2 5.3 V7"/><path d="M16.2 10.5 C16.2 12.8 14.8 14.6 12.6 14.8"/><path d="M18 10.3 C17.8 14.8 15.6 17.6 12.1 17.8 C10.8 17.8 9.8 17.4 9 16.8"/><path d="M5.2 9.6 L6.3 11.6"/><path d="M12.1 17.8 V22.4 M9.2 22.4 H15.1"/><path d="M0.4 23.6 L23.6 0.4"/></g></svg><svg class="ic" style="left:1826px;top:575.9px" width="24" height="24" viewBox="0 0 24 24"><g fill="none" stroke="#e0282e" stroke-width="1.6" stroke-linejoin="round"><path d="M14.2 5 H3.9 C2.2 5 0.9 6.3 0.9 8 V15.5 C0.9 16.6 1.4 17.5 2.3 18"/><path d="M8 18.5 H14.4 C16.1 18.5 17.4 17.2 17.4 15.5 V9.8"/><path d="M17.4 9.5 L23 6 V17.5 L17.4 14"/><path d="M0.4 23.6 L23.6 0.4"/></g></svg>
<div class="av" style="left:1438.8px;top:628.4px;background:#c0392b">AP</div><div class="t pn" style="left:1498.4px;top:643.0px;transform:scaleX(1.0185)">Alejandra Portillo</div><svg class="ic" style="left:1790px;top:637.9px" width="24" height="24" viewBox="0 0 24 24"><g fill="none" stroke="#e0282e" stroke-width="1.6"><path d="M8.2 11.5 V5.3 A4 4 0 0 1 16.2 5.3 V7"/><path d="M16.2 10.5 C16.2 12.8 14.8 14.6 12.6 14.8"/><path d="M18 10.3 C17.8 14.8 15.6 17.6 12.1 17.8 C10.8 17.8 9.8 17.4 9 16.8"/><path d="M5.2 9.6 L6.3 11.6"/><path d="M12.1 17.8 V22.4 M9.2 22.4 H15.1"/><path d="M0.4 23.6 L23.6 0.4"/></g></svg><svg class="ic" style="left:1826px;top:637.9px" width="24" height="24" viewBox="0 0 24 24"><g fill="none" stroke="#e0282e" stroke-width="1.6" stroke-linejoin="round"><path d="M14.2 5 H3.9 C2.2 5 0.9 6.3 0.9 8 V15.5 C0.9 16.6 1.4 17.5 2.3 18"/><path d="M8 18.5 H14.4 C16.1 18.5 17.4 17.2 17.4 15.5 V9.8"/><path d="M17.4 9.5 L23 6 V17.5 L17.4 14"/><path d="M0.4 23.6 L23.6 0.4"/></g></svg>
<div class="av" style="left:1438.8px;top:690.4px;background:#8e44ad">AD</div><div class="t pn" style="left:1498.4px;top:705.0px;transform:scaleX(0.9865)">Alejandro De León</div><svg class="ic" style="left:1790px;top:699.9px" width="24" height="24" viewBox="0 0 24 24"><g fill="none" stroke="#e0282e" stroke-width="1.6"><path d="M8.2 11.5 V5.3 A4 4 0 0 1 16.2 5.3 V7"/><path d="M16.2 10.5 C16.2 12.8 14.8 14.6 12.6 14.8"/><path d="M18 10.3 C17.8 14.8 15.6 17.6 12.1 17.8 C10.8 17.8 9.8 17.4 9 16.8"/><path d="M5.2 9.6 L6.3 11.6"/><path d="M12.1 17.8 V22.4 M9.2 22.4 H15.1"/><path d="M0.4 23.6 L23.6 0.4"/></g></svg><svg class="ic" style="left:1826px;top:699.9px" width="24" height="24" viewBox="0 0 24 24"><g fill="none" stroke="#e0282e" stroke-width="1.6" stroke-linejoin="round"><path d="M14.2 5 H3.9 C2.2 5 0.9 6.3 0.9 8 V15.5 C0.9 16.6 1.4 17.5 2.3 18"/><path d="M8 18.5 H14.4 C16.1 18.5 17.4 17.2 17.4 15.5 V9.8"/><path d="M17.4 9.5 L23 6 V17.5 L17.4 14"/><path d="M0.4 23.6 L23.6 0.4"/></g></svg>
<div class="av" style="left:1438.8px;top:752.4px;background:#f39c12">AG</div><div class="t pn" style="left:1498.4px;top:767.0px;transform:scaleX(0.9771)">Alicia Gonzalez</div><svg class="ic" style="left:1790px;top:761.9px" width="24" height="24" viewBox="0 0 24 24"><g fill="none" stroke="#e0282e" stroke-width="1.6"><path d="M8.2 11.5 V5.3 A4 4 0 0 1 16.2 5.3 V7"/><path d="M16.2 10.5 C16.2 12.8 14.8 14.6 12.6 14.8"/><path d="M18 10.3 C17.8 14.8 15.6 17.6 12.1 17.8 C10.8 17.8 9.8 17.4 9 16.8"/><path d="M5.2 9.6 L6.3 11.6"/><path d="M12.1 17.8 V22.4 M9.2 22.4 H15.1"/><path d="M0.4 23.6 L23.6 0.4"/></g></svg><svg class="ic" style="left:1826px;top:761.9px" width="24" height="24" viewBox="0 0 24 24"><g fill="none" stroke="#6e6e7c" stroke-width="1.6" stroke-linejoin="round"><rect x="0.9" y="5" width="16.5" height="13.5" rx="3"/><path d="M17.4 9.5 L23 6 V17.5 L17.4 14"/></g></svg>
<div class="av" style="left:1438.8px;top:814.4px;background:#d35400">AD</div><div class="t pn" style="left:1498.4px;top:829.0px;transform:scaleX(0.9944)">Ana Domínguez</div><svg class="ic" style="left:1790px;top:823.9px" width="24" height="24" viewBox="0 0 24 24"><g fill="none" stroke="#e0282e" stroke-width="1.6"><path d="M8.2 11.5 V5.3 A4 4 0 0 1 16.2 5.3 V7"/><path d="M16.2 10.5 C16.2 12.8 14.8 14.6 12.6 14.8"/><path d="M18 10.3 C17.8 14.8 15.6 17.6 12.1 17.8 C10.8 17.8 9.8 17.4 9 16.8"/><path d="M5.2 9.6 L6.3 11.6"/><path d="M12.1 17.8 V22.4 M9.2 22.4 H15.1"/><path d="M0.4 23.6 L23.6 0.4"/></g></svg><svg class="ic" style="left:1826px;top:823.9px" width="24" height="24" viewBox="0 0 24 24"><g fill="none" stroke="#6e6e7c" stroke-width="1.6" stroke-linejoin="round"><rect x="0.9" y="5" width="16.5" height="13.5" rx="3"/><path d="M17.4 9.5 L23 6 V17.5 L17.4 14"/></g></svg>
<div class="av" style="left:1438.8px;top:876.4px;background:#27ae60">AV</div><div class="t pn" style="left:1498.4px;top:891.0px;transform:scaleX(0.9636)">Andrea Velasco</div><svg class="ic" style="left:1790px;top:885.9px" width="24" height="24" viewBox="0 0 24 24"><g fill="none" stroke="#e0282e" stroke-width="1.6"><path d="M8.2 11.5 V5.3 A4 4 0 0 1 16.2 5.3 V7"/><path d="M16.2 10.5 C16.2 12.8 14.8 14.6 12.6 14.8"/><path d="M18 10.3 C17.8 14.8 15.6 17.6 12.1 17.8 C10.8 17.8 9.8 17.4 9 16.8"/><path d="M5.2 9.6 L6.3 11.6"/><path d="M12.1 17.8 V22.4 M9.2 22.4 H15.1"/><path d="M0.4 23.6 L23.6 0.4"/></g></svg><svg class="ic" style="left:1826px;top:885.9px" width="24" height="24" viewBox="0 0 24 24"><g fill="none" stroke="#e0282e" stroke-width="1.6" stroke-linejoin="round"><path d="M14.2 5 H3.9 C2.2 5 0.9 6.3 0.9 8 V15.5 C0.9 16.6 1.4 17.5 2.3 18"/><path d="M8 18.5 H14.4 C16.1 18.5 17.4 17.2 17.4 15.5 V9.8"/><path d="M17.4 9.5 L23 6 V17.5 L17.4 14"/><path d="M0.4 23.6 L23.6 0.4"/></g></svg>

<div class="btn" style="left:1462px;top:953px;width:72px;line-height:37px">Invitar</div>
<div class="btn" style="left:1589px;top:953px;width:153px;font-size:17.6px;line-height:37px">Silenciar a todos</div>
<div class="btn" style="left:1797px;top:953px;width:35px;line-height:36px">...</div>

<svg class="a" style="left:1124px;top:455px" width="272" height="153" viewBox="0 0 272 153">
<defs>
<linearGradient id="wall" x1="0" y1="0" x2="1" y2="0"><stop offset="0" stop-color="#d2d4d0"/><stop offset="0.28" stop-color="#dadbd6"/><stop offset="0.31" stop-color="#cfd0ca"/><stop offset="0.34" stop-color="#e2e2dc"/><stop offset="0.7" stop-color="#e0e1db"/><stop offset="1" stop-color="#d8dad4"/></linearGradient>
<linearGradient id="jk" x1="0" y1="0" x2="1" y2="1"><stop offset="0" stop-color="#7e5c3a"/><stop offset="1" stop-color="#5e4228"/></linearGradient>
<radialGradient id="skin" cx="0.5" cy="0.3" r="0.65"><stop offset="0" stop-color="#ccab98"/><stop offset="0.6" stop-color="#b48c76"/><stop offset="1" stop-color="#8a6450"/></radialGradient>
<filter id="vb" x="-5%" y="-5%" width="110%" height="110%"><feGaussianBlur stdDeviation="0.6"/></filter>
</defs>
<rect width="272" height="153" fill="url(#wall)"/>
<g filter="url(#vb)">
<polygon points="110.3,6.8 144.8,0 144.8,26.3 111,33.8" fill="#f4f4f2" stroke="#1e1e1e" stroke-width="1.5"/>
<polygon points="119,10 125,8 120,24 116,25" fill="#7a88b8"/>
<rect x="125" y="14" width="10" height="3" fill="#6a7aa8" opacity="0.6"/>
<polygon points="150,13 165,10 166.5,19.5 151,20" fill="#8a7a70" opacity="0.7"/>
<polygon points="173.3,0 215.3,0 215.3,12 174.8,22.5" fill="#e6e4de" stroke="#2a2222" stroke-width="2.2"/>
<polygon points="200,2 212,2 210,9" fill="#4a5a9a" opacity="0.5"/>
<polygon points="219.8,0 252.8,0 253.6,20.3 223.5,27.8" fill="#cfcfc8" stroke="#5a3a2c" stroke-width="2.6"/>
<rect x="227" y="6" width="20" height="10" fill="#707070" opacity="0.45"/>
<path d="M63 153 L66 124 C70 108 76 96 88 90 C102 84 116 82 128 81 L176 83 C192 86 204 92 209 100 C214 112 214 130 216 153 Z" fill="url(#jk)"/>
<path d="M128 81 L176 83 L172 124 L150 128 L130 124 Z" fill="#eef0f2"/>
<path d="M122 84 L131 118 L140 128 L118 124 Z M176 84 L168 118 L160 128 L186 124 Z" fill="#5e4024"/>
<path d="M126 50 C122 30 132 15 153 15 C173 15 184 26 182 48 C181 54 180 58 178 62 L176 44 C170 36 162 33 153 33 C142 33 134 37 131 46 L129 62 C127 58 126 54 126 50 Z" fill="#261c16"/>
<path d="M130 46 C130 36 138 31 153 31 C168 31 178 36 178 48 C179 64 175 78 166 86 C160 90 146 90 140 86 C133 78 129 62 130 46 Z" fill="url(#skin)"/>
<path d="M130 58 C131 74 138 88 153 90 C168 88 176 74 177 58 C174 66 170 72 163 73 C157 70 150 70 144 73 C137 72 133 66 130 58 Z" fill="#35261e"/>
<path d="M146 68 C151 66 158 66 163 68 C158 73 151 73 146 68Z" fill="#f2ece6"/>
<path d="M139 46 H149 M162 46 H172" stroke="#3a2820" stroke-width="2"/>
<path d="M150 50 L148 58 L156 58" stroke="#8a6450" stroke-width="1.5" fill="none"/>
</g>
<rect x="0" y="124.5" width="272" height="28.5" fill="#303030" opacity="0.74"/>
<rect x="4.5" y="141" width="3.6" height="6.3" fill="#fff"/>
<rect x="10" y="137" width="3.6" height="10.3" fill="#fff"/>
<rect x="15.6" y="133.5" width="3.6" height="13.8" fill="#fff"/>
<rect x="21.2" y="130" width="3.6" height="17.3" fill="#fff"/>
</svg>
<div class="t" style="left:1157px;top:585.5px;font-size:18px;color:#fff;transform:scaleX(0.944);transform-origin:0 0">MIGUEL ALFREDO HERNA...</div>
<svg class="ic" style="left:1102px;top:780px" width="6" height="18" viewBox="0 0 6 18"><path d="M1.5 2 L6 7 V13 L1.5 16 Z" fill="#111"/></svg>
</body></html>
